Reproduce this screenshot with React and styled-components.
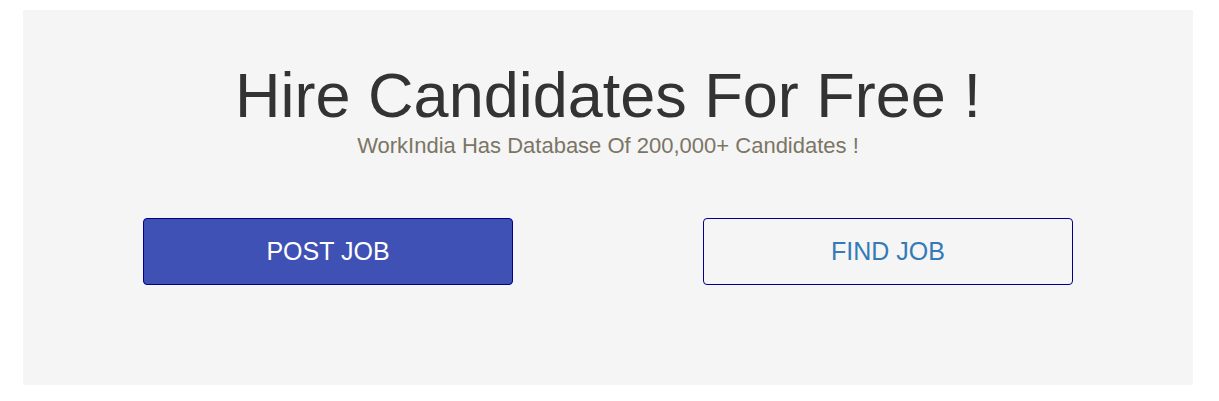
import React from "react";
import styled, { createGlobalStyle } from "styled-components";

const Global = createGlobalStyle`
  html, body { margin: 0; padding: 0; background: #ffffff; }
  body { font-family: "Liberation Sans", Arial, sans-serif; }
`;

const Page = styled.div`
  padding: 10px 26px 16px 23px;
`;

const Panel = styled.section`
  width: 1170px;
  height: 375px;
  box-sizing: border-box;
  background: #f5f5f5;
  display: flex;
  flex-direction: column;
  align-items: center;
  padding-top: 49px;
`;

const Title = styled.h1`
  margin: 0;
  font-size: 63px;
  line-height: 72px;
  font-weight: 400;
  color: #333333;
`;

const Subtitle = styled.p`
  margin: 2px 0 0;
  font-size: 22px;
  line-height: 26px;
  color: #7b7565;
`;

const Actions = styled.div`
  display: flex;
  gap: 190px;
  margin-top: 59px;
`;

const Button = styled.button`
  width: 370px;
  height: 67px;
  box-sizing: border-box;
  border: 1px solid #00008b;
  border-radius: 4px;
  font-family: "Liberation Sans", Arial, sans-serif;
  font-size: 25px;
  cursor: pointer;
  background: ${(p) => (p.$primary ? "#3f51b5" : "transparent")};
  color: ${(p) => (p.$primary ? "#ffffff" : "#337ab7")};
`;

export default function App() {
  return (
    <Page>
      <Global />
      <Panel>
        <Title>Hire Candidates For Free !</Title>
        <Subtitle>WorkIndia Has Database Of 200,000+ Candidates !</Subtitle>
        <Actions>
          <Button $primary>POST JOB</Button>
          <Button>FIND JOB</Button>
        </Actions>
      </Panel>
    </Page>
  );
}
